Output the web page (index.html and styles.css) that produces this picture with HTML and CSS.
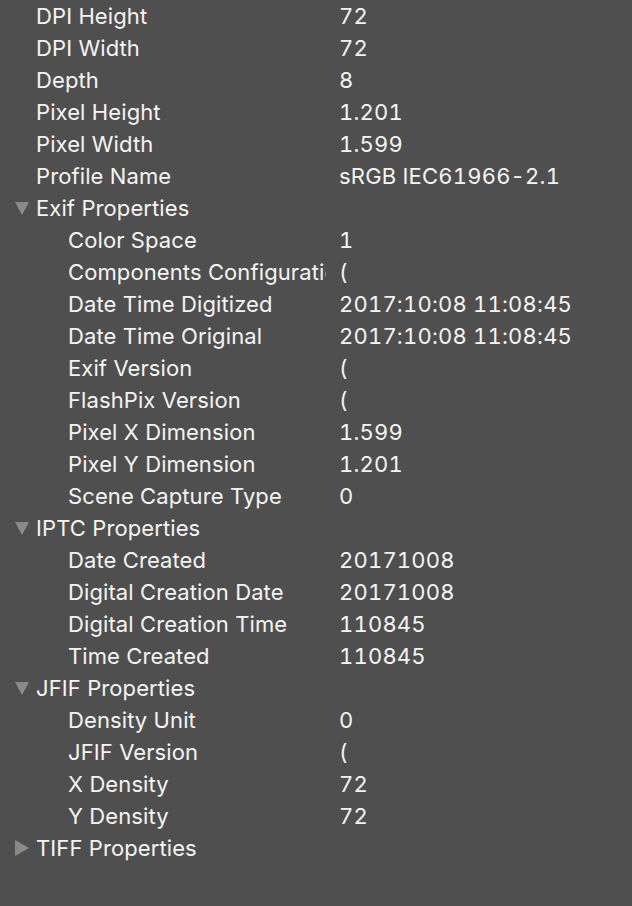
FILE: index.html
```html
<!DOCTYPE html>
<html>
<head>
<meta charset="utf-8">
<link rel="stylesheet" href="styles.css">
</head>
<body>
<div class="list">
  <div class="row"><span class="key">DPI Height</span><span class="val">72</span></div>
  <div class="row"><span class="key">DPI Width</span><span class="val">72</span></div>
  <div class="row"><span class="key">Depth</span><span class="val">8</span></div>
  <div class="row"><span class="key">Pixel Height</span><span class="val">1.201</span></div>
  <div class="row"><span class="key">Pixel Width</span><span class="val">1.599</span></div>
  <div class="row"><span class="key">Profile Name</span><span class="val">sRGB IEC61966-2.1</span></div>
  <div class="row group"><span class="tri open"></span><span class="key">Exif Properties</span></div>
  <div class="row sub"><span class="key">Color Space</span><span class="val">1</span></div>
  <div class="row sub"><span class="key">Components Configuration</span><span class="val">(</span></div>
  <div class="row sub"><span class="key">Date Time Digitized</span><span class="val">2017:10:08 11:08:45</span></div>
  <div class="row sub"><span class="key">Date Time Original</span><span class="val">2017:10:08 11:08:45</span></div>
  <div class="row sub"><span class="key">Exif Version</span><span class="val">(</span></div>
  <div class="row sub"><span class="key">FlashPix Version</span><span class="val">(</span></div>
  <div class="row sub"><span class="key">Pixel X Dimension</span><span class="val">1.599</span></div>
  <div class="row sub"><span class="key">Pixel Y Dimension</span><span class="val">1.201</span></div>
  <div class="row sub"><span class="key">Scene Capture Type</span><span class="val">0</span></div>
  <div class="row group"><span class="tri open"></span><span class="key">IPTC Properties</span></div>
  <div class="row sub"><span class="key">Date Created</span><span class="val">20171008</span></div>
  <div class="row sub"><span class="key">Digital Creation Date</span><span class="val">20171008</span></div>
  <div class="row sub"><span class="key">Digital Creation Time</span><span class="val">110845</span></div>
  <div class="row sub"><span class="key">Time Created</span><span class="val">110845</span></div>
  <div class="row group"><span class="tri open"></span><span class="key">JFIF Properties</span></div>
  <div class="row sub"><span class="key">Density Unit</span><span class="val">0</span></div>
  <div class="row sub"><span class="key">JFIF Version</span><span class="val">(</span></div>
  <div class="row sub"><span class="key">X Density</span><span class="val">72</span></div>
  <div class="row sub"><span class="key">Y Density</span><span class="val">72</span></div>
  <div class="row group"><span class="tri closed"></span><span class="key">TIFF Properties</span></div>
</div>
</body>
</html>
```
FILE: styles.css
```css
html, body {
  margin: 0;
  padding: 0;
  background: #4f4f4f;
}
body {
  width: 632px;
  height: 906px;
  overflow: hidden;
  font-family: Inter, "Liberation Sans", sans-serif;
  font-size: 22px;
  color: #f4f4f4;
}
.list {
  display: flex;
  flex-direction: column;
}
.row {
  height: 32px;
  display: flex;
  align-items: center;
  padding-left: 36px;
  white-space: nowrap;
}
.row.group {
  padding-left: 14px;
}
.row.sub {
  padding-left: 68px;
}
.key {
  width: 290px;
  overflow: hidden;
  flex: none;
  letter-spacing: 0.1px;
}
.row.sub .key {
  width: 258px;
  margin-right: 13px;
}
.row:not(.sub):not(.group) .key {
  width: 303px;
}
.val {
  flex: none;
  font-variant-numeric: tabular-nums;
  letter-spacing: 0.2px;
}
.tri {
  width: 22px;
  height: 32px;
  flex: none;
  position: relative;
}
.tri.open::before {
  content: "";
  position: absolute;
  left: 1px;
  top: 10px;
  border-left: 7.5px solid transparent;
  border-right: 7.5px solid transparent;
  border-top: 13px solid #8a8a8a;
}
.tri.closed::before {
  content: "";
  position: absolute;
  left: 1px;
  top: 8px;
  border-top: 8px solid transparent;
  border-bottom: 8px solid transparent;
  border-left: 14px solid #8a8a8a;
}
```
